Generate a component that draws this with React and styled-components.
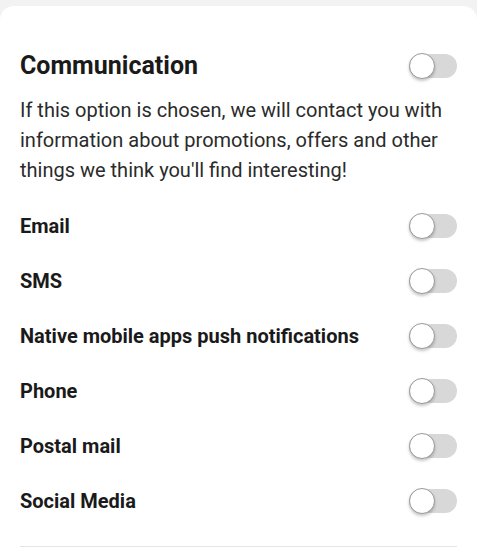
import React, { useState } from 'react'
import styled, { createGlobalStyle } from 'styled-components'

const GlobalStyle = createGlobalStyle`
    html, body {
        margin: 0;
        padding: 0;
        background: #f2f2f2;
        font-family: Roboto, "Liberation Sans", Arial, sans-serif;
        color: #1f1f1f;
    }
    * {
        box-sizing: border-box;
    }
`

const Card = styled.section`
    margin-top: 6px;
    background: #fff;
    border-radius: 14px 14px 0 0;
    padding: 45px 20px 0 20px;
    min-height: 560px;
`

const Header = styled.div`
    display: flex;
    align-items: center;
    justify-content: space-between;
    height: 30px;
`

const Title = styled.h2`
    margin: 0;
    font-size: 25px;
    font-weight: 700;
    line-height: 30px;
    color: #1a1a1a;
`

const Description = styled.p`
    margin: 14px 0 0 0;
    font-size: 20px;
    line-height: 30px;
    color: #2b2b2b;
`

const List = styled.ul`
    list-style: none;
    margin: 13px 0 0 0;
    padding: 0;
`

const Row = styled.li`
    display: flex;
    align-items: center;
    justify-content: space-between;
    height: 55px;
`

const Label = styled.span`
    font-size: 20px;
    font-weight: 700;
    color: #1a1a1a;
`

const Divider = styled.hr`
    margin: 18px 0 0 0;
    border: 0;
    border-top: 1px solid #e4e4e4;
`

const Track = styled.button`
    position: relative;
    width: 48px;
    height: 24px;
    padding: 0;
    border: 0;
    border-radius: 12px;
    background: ${props => (props.on ? '#9ccaf0' : '#d8d8d8')};
    cursor: pointer;
    flex-shrink: 0;
`

const Thumb = styled.span`
    position: absolute;
    top: -1px;
    left: ${props => (props.on ? '22px' : '0')};
    width: 26px;
    height: 26px;
    border-radius: 50%;
    background: #fff;
    border: 1px solid #9a9a9a;
    box-shadow: 0 2px 3px rgba(0, 0, 0, 0.22);
    transition: left 0.15s;
`

function Toggle({ label }) {
    const [on, setOn] = useState(false)
    return (
        <Track type="button" aria-label={label} aria-pressed={on} on={on ? 1 : 0} onClick={() => setOn(!on)}>
            <Thumb on={on ? 1 : 0} />
        </Track>
    )
}

const channels = [
    'Email',
    'SMS',
    'Native mobile apps push notifications',
    'Phone',
    'Postal mail',
    'Social Media',
]

export default function App() {
    return (
        <>
            <GlobalStyle />
            <Card>
                <Header>
                    <Title>Communication</Title>
                    <Toggle label="Communication" />
                </Header>
                <Description>
                    If this option is chosen, we will contact you with information about promotions, offers and other things we think you'll find interesting!
                </Description>
                <List>
                    {channels.map(c => (
                        <Row key={c}>
                            <Label>{c}</Label>
                            <Toggle label={c} />
                        </Row>
                    ))}
                </List>
                <Divider />
            </Card>
        </>
    )
}
